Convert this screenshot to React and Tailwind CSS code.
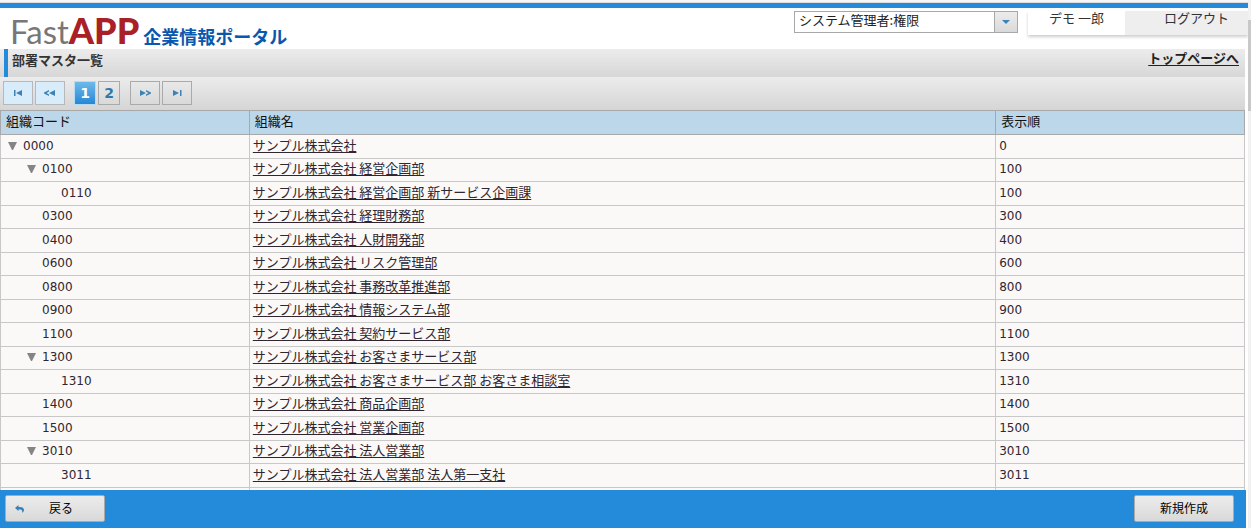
import { useState } from "react";

const rows = [
  { code: "0000", name: "サンプル株式会社", order: 0, level: 0, open: true },
  { code: "0100", name: "サンプル株式会社 経営企画部", order: 100, level: 1, open: true },
  { code: "0110", name: "サンプル株式会社 経営企画部 新サービス企画課", order: 100, level: 2 },
  { code: "0300", name: "サンプル株式会社 経理財務部", order: 300, level: 1 },
  { code: "0400", name: "サンプル株式会社 人財開発部", order: 400, level: 1 },
  { code: "0600", name: "サンプル株式会社 リスク管理部", order: 600, level: 1 },
  { code: "0800", name: "サンプル株式会社 事務改革推進部", order: 800, level: 1 },
  { code: "0900", name: "サンプル株式会社 情報システム部", order: 900, level: 1 },
  { code: "1100", name: "サンプル株式会社 契約サービス部", order: 1100, level: 1 },
  { code: "1300", name: "サンプル株式会社 お客さまサービス部", order: 1300, level: 1, open: true },
  { code: "1310", name: "サンプル株式会社 お客さまサービス部 お客さま相談室", order: 1310, level: 2 },
  { code: "1400", name: "サンプル株式会社 商品企画部", order: 1400, level: 1 },
  { code: "1500", name: "サンプル株式会社 営業企画部", order: 1500, level: 1 },
  { code: "3010", name: "サンプル株式会社 法人営業部", order: 3010, level: 1, open: true },
  { code: "3011", name: "サンプル株式会社 法人営業部 法人第一支社", order: 3011, level: 2 },
];

const indents = ["pl-[7px]", "pl-[26px]", "pl-[45px]"];

function Arrow({ d }) {
  return (
    <svg width="12" height="8" viewBox="0 0 12 8" fill="#3c82b4" aria-hidden="true">
      <path d={d} />
    </svg>
  );
}

function PagerButton({ label, d, current }) {
  return (
    <button
      type="button"
      aria-label={label}
      className={
        current
          ? "flex h-6 w-[30px] items-center justify-center border border-[#b5b9bc] bg-[#d9ecf9]"
          : "flex h-6 w-[30px] items-center justify-center border border-[#aaaaaa] bg-transparent"
      }
    >
      <Arrow d={d} />
    </button>
  );
}

function Header() {
  return (
    <header className="flex h-[41px] shrink-0 items-start justify-between">
      <div className="flex items-baseline gap-1 pt-[6px] pl-[10px] leading-8">
        <div className="flex items-baseline [font-family:Lato,sans-serif]">
          <span className="text-[33px] text-[#777777]">Fast</span>
          <span className="text-4xl leading-8 font-black text-[#a92027]">APP</span>
        </div>
        <span className="text-lg leading-6 font-bold text-[#0a58ae]">企業情報ポータル</span>
      </div>
      <div className="flex items-start pt-[3px]">
        <div className="relative mr-[10px] flex h-[22px] w-[224px]">
          <select
            aria-label="権限"
            className="h-full w-full appearance-none border border-[#a8a8a8] bg-white pb-1 pl-1 text-[13px] leading-4 text-[#222222]"
          >
            <option>システム管理者:権限</option>
          </select>
          <span className="pointer-events-none absolute inset-y-0 right-0 flex w-6 items-center justify-center border border-[#a8a8a8] bg-linear-to-b from-[#ececec] to-[#d9d9d9]">
            <svg width="8" height="4" viewBox="0 0 8 4" fill="#3c82b4" aria-hidden="true">
              <path d="M0 0h8L4 4z" />
            </svg>
          </span>
        </div>
        <nav className="flex h-6 w-[220px] text-[13px] leading-3 text-[#333333] shadow-[0_2px_3px_rgba(0,0,0,0.2)]">
          <a href="#user" className="w-[97px] bg-white pt-px text-center">デモ 一郎</a>
          <a href="#logout" className="flex-1 bg-[#eeeeee] pt-px pl-5 text-center">ログアウト</a>
        </nav>
      </div>
    </header>
  );
}

function Pager() {
  const [page, setPage] = useState(1);
  return (
    <nav
      aria-label="ページ"
      className="flex h-[33px] shrink-0 items-start bg-linear-to-b from-[#ececec] to-[#d5d5d5] pt-1 pl-[3px]"
    >
      <div className="flex gap-0.5">
        <PagerButton label="最初" d="M2 1h1.500v6H2zM10 1v6L4 4z" current />
        <PagerButton label="前へ" d="M5 1v1.500L2.500 4 5 5.500V7L0 4.500v-1zM11 1v6L5 4z" current />
      </div>
      <div className="mr-[10px] ml-[9px] flex gap-0.5">
        {[1, 2].map((n) => (
          <button
            key={n}
            type="button"
            onClick={() => setPage(n)}
            className={
              n === page
                ? "h-6 w-[22px] border border-[#b5dcf5] bg-linear-to-b from-[#6db9ea] to-[#2587d6] font-['DejaVu_Sans'] text-sm leading-5 font-bold text-white"
                : "h-6 w-[22px] border border-[#aaaaaa] font-['DejaVu_Sans'] text-sm leading-5 font-bold text-[#3478a8]"
            }
          >
            {n}
          </button>
        ))}
      </div>
      <div className="flex gap-0.5">
        <PagerButton label="次へ" d="M1 1v6l6-3zM7 1v1.500L9.500 4 7 5.500V7l5-2.500v-1z" />
        <PagerButton label="最後" d="M2 1v6l6-3zM9 1h1.500v6H9z" />
      </div>
    </nav>
  );
}

function OrgTable() {
  return (
    <table className="w-full table-fixed border-collapse bg-[#faf9f7] text-[13px] leading-4 text-[#302530]">
      <colgroup>
        <col className="w-[20%]" />
        <col className="w-[60%]" />
        <col className="w-[20%]" />
      </colgroup>
      <thead>
        <tr className="h-6 bg-[#bcd7ea] text-left text-[#111111]">
          {["組織コード", "組織名", "表示順"].map((h) => (
            <th key={h} className="border border-[#a8a8a8] px-[5px] pb-1 font-normal">{h}</th>
          ))}
        </tr>
      </thead>
      <tbody>
        {rows.map((r) => (
          <tr key={r.code} className="odd:h-6 even:h-[23px]">
            <td className={`border border-[#c8c8c8] pb-0.5 ${indents[r.level]}`}>
              <div className="flex items-center gap-[6px]">
                <svg width="9" height="8" viewBox="0 0 9 8" fill="#858585" aria-hidden="true">
                  {r.open && <path d="M0 0h9L5 8H4z" />}
                </svg>
                <span className="font-['DejaVu_Sans'] text-xs leading-4">{r.code}</span>
              </div>
            </td>
            <td className="border border-[#c8c8c8] px-[3px] pb-1">
              <a href={`#${r.code}`} className="underline underline-offset-2">{r.name}</a>
            </td>
            <td className="border border-[#c8c8c8] px-[3px] pb-0.5 font-['DejaVu_Sans'] text-xs leading-4">{r.order}</td>
          </tr>
        ))}
        <tr className="h-6">
          <td className="border border-[#c8c8c8]" />
          <td className="border border-[#c8c8c8]" />
          <td className="border border-[#c8c8c8]" />
        </tr>
      </tbody>
    </table>
  );
}

export default function App() {
  return (
    <div className="flex h-screen overflow-hidden bg-white font-['Noto_Sans_CJK_JP',sans-serif]">
      <div className="flex min-w-0 flex-1 flex-col">
        <div className="h-[3px] shrink-0 border-b border-[#dddddd] bg-[#f7f7f7]" />
        <div className="h-[5px] shrink-0 bg-[#238bd9]" />
        <Header />
        <div className="mr-[3px] flex min-h-0 flex-1 flex-col">
          <div className="flex h-7 shrink-0 bg-linear-to-b from-[#ececec] to-[#d7d7d7] pl-1">
            <div className="flex flex-1 items-start justify-between border-l-4 border-[#238bd9] pt-[3px] pr-[6px] pl-1">
              <h1 className="text-[13px] leading-4 font-bold text-[#333333]">部署マスタ一覧</h1>
              <a href="#top" className="text-[13px] leading-3 font-bold text-[#222222] underline underline-offset-2">
                トップページへ
              </a>
            </div>
          </div>
          <Pager />
          <div className="min-h-0 flex-1 overflow-hidden">
            <OrgTable />
          </div>
        </div>
        <footer className="mr-0.5 flex h-[38px] shrink-0 items-start justify-between bg-[#238bd9] pt-[5px] pr-3 pl-[5px]">
          <button
            type="button"
            className="flex h-[27px] w-[100px] items-center rounded-xs border border-[#aaaaaa] bg-linear-to-b from-[#ececec] to-[#d9d9d9] pl-[9px] text-xs leading-4 text-black"
          >
            <svg width="9" height="8" viewBox="0 0 9 8" fill="#3c82b4" aria-hidden="true">
              <path d="M0 3l3.500-3v2H5c2.500 0 4 1 4 3 0 1.200-.8 2.200-2 3 .5-2 0-3.500-2-3.500H3.500V6z" />
            </svg>
            <span className="flex-1 pr-1.5 pb-0.5 text-center">戻る</span>
          </button>
          <button
            type="button"
            className="h-[27px] w-[100px] rounded-xs border border-[#aaaaaa] bg-linear-to-b from-[#ececec] to-[#d9d9d9] pb-0.5 text-xs leading-4 text-black"
          >
            新規作成
          </button>
        </footer>
      </div>
      <div className="flex w-[3px] shrink-0 flex-col bg-[#f1f1f1] pt-5">
        <div className="h-[91px] bg-[#c8c8c8]" />
      </div>
    </div>
  );
}
